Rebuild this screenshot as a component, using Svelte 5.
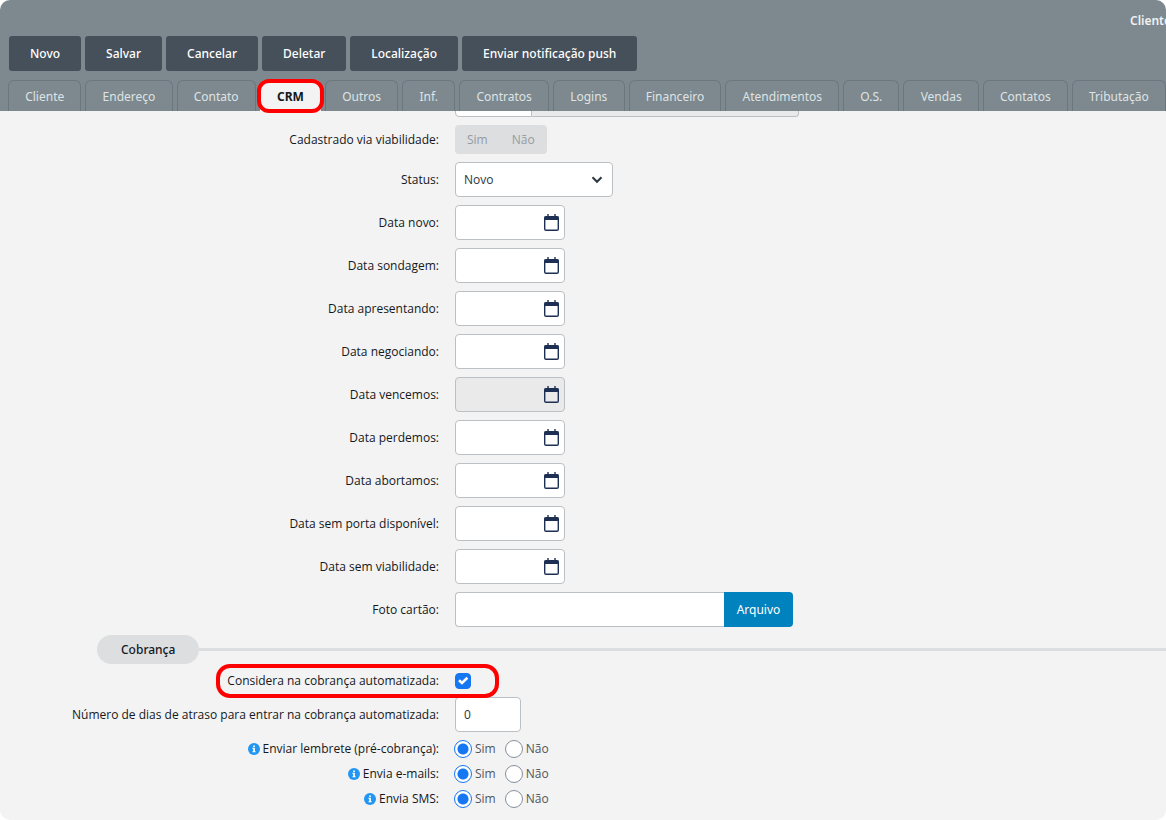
<script>
    const actions = ["Novo", "Salvar", "Cancelar", "Deletar", "Localização", "Enviar notificação push"];

    const tabs = [
        "Cliente", "Endereço", "Contato", "CRM", "Outros", "Inf.", "Contratos", "Logins",
        "Financeiro", "Atendimentos", "O.S.", "Vendas", "Contatos", "Tributação",
    ];
    const activeTab = "CRM";

    const dates = [
        { id: "novo", label: "Data novo:" },
        { id: "sondagem", label: "Data sondagem:" },
        { id: "apresentando", label: "Data apresentando:" },
        { id: "negociando", label: "Data negociando:" },
        { id: "vencemos", label: "Data vencemos:", disabled: true },
        { id: "perdemos", label: "Data perdemos:" },
        { id: "abortamos", label: "Data abortamos:" },
        { id: "sem-porta", label: "Data sem porta disponível:" },
        { id: "sem-viabilidade", label: "Data sem viabilidade:" },
    ];

    let status = $state("Novo");
    let cobranca = $state(true);
    let dias = $state("0");

    let avisos = $state([
        { id: "lembrete", label: "Enviar lembrete (pré-cobrança):", value: "S" },
        { id: "emails", label: "Envia e-mails:", value: "S" },
        { id: "sms", label: "Envia SMS:", value: "S" },
    ]);
</script>

<div class="panel">
    <header>
        <div class="title-bar"><span class="title">Cliente</span></div>

        <div class="actions">
            {#each actions as action}
                <button type="button">{action}</button>
            {/each}
        </div>

        <nav class="tabs">
            {#each tabs as tab}
                <a href="#tab" class="tab" class:active={tab === activeTab}>{tab}</a>
            {/each}
        </nav>
    </header>

    <form>
        <div class="row">
            <span></span>
            <div class="lookup">
                <input class="code" type="text" aria-label="Código" />
                <input class="description" type="text" aria-label="Descrição" disabled />
            </div>
        </div>

        <div class="row">
            <span class="label" id="viabilidade">Cadastrado via viabilidade:</span>
            <div class="toggle" role="group" aria-labelledby="viabilidade">
                <button type="button" disabled>Sim</button>
                <button type="button" disabled>Não</button>
            </div>
        </div>

        <div class="row">
            <label class="label" for="status">Status:</label>
            <div class="select">
                <select id="status" class="field" bind:value={status}>
                    <option>Novo</option>
                </select>
                <svg class="chevron" viewBox="0 0 12 8" width="12" height="8">
                    <path d="M1.5 1.3 6 5.8 10.5 1.3" fill="none" stroke="#2c3640" stroke-width="2" />
                </svg>
            </div>
        </div>

        {#each dates as date}
            <div class="row">
                <label class="label" for={date.id}>{date.label}</label>
                <div class="date field" class:disabled={date.disabled}>
                    <input id={date.id} type="text" disabled={date.disabled} />
                    <button type="button" aria-label="Abrir calendário" disabled={date.disabled}>
                        <svg viewBox="0 0 16 18" width="16" height="18">
                            <path d="M5 0v4M12 0v4" stroke="#1d2f52" stroke-width="1.4" />
                            <rect x="1.7" y="2.8" width="13.6" height="13.4" rx="1.3" fill="none" stroke="#1d2f52" stroke-width="1.4" />
                            <path d="M1.5 2.5h14V6h-14z" fill="#1d2f52" />
                        </svg>
                    </button>
                </div>
            </div>
        {/each}

        <div class="row">
            <label class="label" for="foto">Foto cartão:</label>
            <div class="file">
                <input id="foto" class="field" type="text" />
                <button type="button">Arquivo</button>
            </div>
        </div>

        <fieldset>
            <legend><span>Cobrança</span></legend>

            <div class="row check-row">
                <label class="label" for="cobranca">Considera na cobrança automatizada:</label>
                <input id="cobranca" type="checkbox" bind:checked={cobranca} />
            </div>

            <div class="row">
                <label class="label" for="dias">Número de dias de atraso para entrar na cobrança automatizada:</label>
                <input id="dias" class="field days" type="text" bind:value={dias} />
            </div>

            <div class="notices">
                {#each avisos as aviso}
                    <div class="row notice">
                        <span class="label" id={aviso.id}>
                            <svg viewBox="0 0 12 12" width="12" height="12">
                                <circle cx="6" cy="6" r="6" fill="#2196f3" />
                                <path d="M5.2 2.4h1.7v1.5H5.2zM4.5 4.8h2.4v3.4h.7v1.1H4.5V8.2h.7V5.9h-.7z" fill="#fff" />
                            </svg>
                            {aviso.label}
                        </span>
                        <div class="radios" role="radiogroup" aria-labelledby={aviso.id}>
                            <label><input type="radio" name={aviso.id} value="S" bind:group={aviso.value} />Sim</label>
                            <label><input type="radio" name={aviso.id} value="N" bind:group={aviso.value} />Não</label>
                        </div>
                    </div>
                {/each}
            </div>
        </fieldset>
    </form>
</div>

<style>
    :global(body) {
        background: #fff;
        font: 12px/16px "Open Sans", "Noto Sans", sans-serif;
        color: #14181c;
    }

    .panel {
        box-sizing: border-box;
        min-height: 100vh;
        background: #f3f3f3;
        border-radius: 10px;
        overflow: hidden;
    }

    button,
    input,
    select {
        box-sizing: border-box;
        margin: 0;
        font: inherit;
        color: inherit;
    }

    button {
        border: 0;
        padding: 0;
        cursor: pointer;
    }

    header,
    legend,
    .file {
        font-family: "Noto Sans", "Open Sans", sans-serif;
    }

    header {
        position: relative;
        z-index: 1;
        background: #7d898e;
    }

    .title-bar {
        display: flex;
        justify-content: flex-end;
        height: 36px;
        box-sizing: border-box;
        padding-top: 13px;
    }

    /* the title runs past the right edge of the panel */
    .title {
        width: 36px;
        font-weight: 600;
        color: #f0f2f3;
    }

    .actions {
        display: flex;
        gap: 4px;
        padding: 0 9px;
    }

    .actions button {
        height: 35px;
        padding: 0 21px;
        border-radius: 3px;
        background: #46505a;
        color: #fff;
        font-weight: 500;
        white-space: nowrap;
    }

    .tabs {
        display: flex;
        gap: 4px;
        padding: 9px 0 0 8px;
    }

    .tab {
        position: relative;
        flex: 1 0 auto;
        height: 30px;
        padding: 0 16px;
        border: 1px solid #6b7780;
        border-bottom: 0;
        border-radius: 6px 6px 0 0;
        color: #dfe3e5;
        line-height: 32px;
        text-align: center;
        text-decoration: none;
    }

    .tab.active {
        background: #f3f3f3;
        border-color: #f3f3f3;
        color: #14181c;
        font-weight: 700;
    }

    .tab.active::after {
        content: "";
        position: absolute;
        inset: -2px -4px;
        border: 4px solid #f00;
        border-radius: 12px;
    }

    /* the first row is scrolled partly under the header */
    form {
        display: flex;
        flex-direction: column;
        gap: 8px;
        margin-top: -29px;
    }

    .row {
        display: grid;
        grid-template-columns: 439px 1fr;
        column-gap: 16px;
        align-items: center;
        justify-items: start;
    }

    .label {
        justify-self: end;
        white-space: nowrap;
    }

    .field {
        height: 35px;
        border: 1px solid #bbc0c5;
        border-radius: 4px;
        background: #fff;
        padding: 0 8px;
        color: #2c3640;
    }

    .lookup {
        display: flex;
        width: 344px;
    }

    .lookup input {
        height: 35px;
        border: 1px solid #bbc0c5;
        background: #fff;
    }

    .lookup .code {
        width: 77px;
        border-radius: 4px 0 0 4px;
    }

    .lookup .description {
        flex: 1;
        border-left: 0;
        border-radius: 0 4px 4px 0;
        background: #eaeaea;
    }

    .toggle {
        display: flex;
        height: 29px;
        border-radius: 4px;
        background: #dcdee0;
    }

    .toggle button {
        padding: 0 12px;
        background: none;
        color: #959ca3;
    }

    .select {
        position: relative;
        width: 158px;
    }

    .select select {
        width: 100%;
        appearance: none;
    }

    .chevron {
        position: absolute;
        right: 10px;
        top: 14px;
        pointer-events: none;
    }

    .date {
        display: flex;
        align-items: center;
        box-sizing: border-box;
        width: 110px;
        padding: 0 5px 0 8px;
    }

    .date.disabled {
        background: #eaeaea;
    }

    .date input {
        flex: 1;
        min-width: 0;
        border: 0;
        background: none;
        outline: 0;
    }

    .date button {
        display: flex;
        background: none;
    }

    .file {
        display: flex;
        width: 338px;
    }

    .file input {
        flex: 1;
        min-width: 0;
        border-right: 0;
        border-radius: 4px 0 0 4px;
    }

    .file button {
        width: 69px;
        border-radius: 0 4px 4px 0;
        background: #0082be;
        color: #fff;
    }

    fieldset {
        margin: 0;
        padding: 0;
        border: 0;
        min-width: 0;
    }

    legend {
        display: flex;
        align-items: center;
        box-sizing: border-box;
        width: 100%;
        padding: 0 0 0 97px;
        font-weight: 500;
    }

    legend span {
        padding: 0 24px;
        border-radius: 15px;
        background: #dcdee0;
        line-height: 29px;
    }

    legend::after {
        content: "";
        flex: 1;
        height: 3px;
        background: #dcdee0;
    }

    .check-row {
        position: relative;
        height: 33px;
    }

    .check-row::after {
        content: "";
        position: absolute;
        left: 216px;
        top: 0;
        box-sizing: border-box;
        width: 283px;
        height: 34px;
        border: 4px solid #f00;
        border-radius: 14px;
        pointer-events: none;
    }

    input[type="checkbox"] {
        width: 16px;
        height: 16px;
        appearance: none;
        border: 1px solid #86909a;
        border-radius: 4px;
        background: #fff;
    }

    input[type="checkbox"]:checked {
        border-color: #1677f2;
        background: #1677f2 url("data:image/svg+xml,%3Csvg xmlns='http://www.w3.org/2000/svg' viewBox='0 0 14 14'%3E%3Cpath d='M3 6.2 6 9 11.4 3.8' fill='none' stroke='%23fff' stroke-width='2.6'/%3E%3C/svg%3E") center / 14px no-repeat;
    }

    .days {
        width: 66px;
    }

    .notices {
        padding: 4px 0 9px;
    }

    .notice {
        height: 25px;
    }

    .notice .label {
        display: flex;
        align-items: center;
        gap: 3px;
    }

    .radios {
        display: flex;
        gap: 9px;
        margin-left: -1px;
    }

    .radios label {
        display: flex;
        align-items: center;
        gap: 3px;
        color: #50565c;
    }

    input[type="radio"] {
        width: 18px;
        height: 18px;
        appearance: none;
        border: 1px solid #86909a;
        border-radius: 50%;
        background: #fff;
    }

    input[type="radio"]:checked {
        border-color: #1677f2;
        background: radial-gradient(circle, #1677f2 5px, #fff 6px);
    }
</style>
